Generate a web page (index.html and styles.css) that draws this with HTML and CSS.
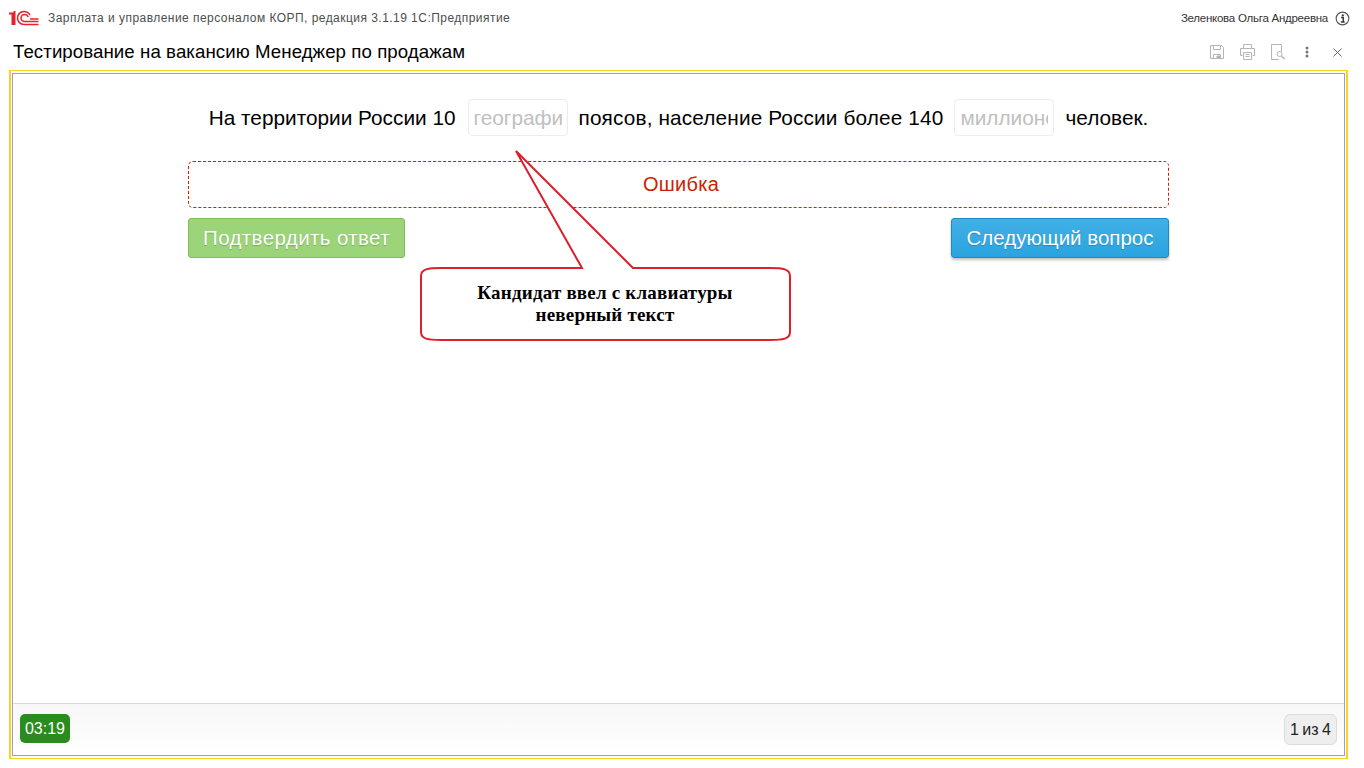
FILE: index.html
```html
<!DOCTYPE html>
<html lang="ru">
<head>
<meta charset="utf-8">
<title>Тестирование на вакансию Менеджер по продажам</title>
<link rel="stylesheet" href="styles.css">
</head>
<body>
<div class="page">
  <header class="topbar">
    <svg class="logo" width="30" height="16" viewBox="0 0 30 16" fill="none" stroke="#e4222c">
      <path d="M0 3.500h3.500V15M5.500 1v14" stroke-width="2"/>
      <path d="M29.500 14.500H15A6.500 6.500 0 1 1 15 1.500c2.600 0 4.500 1 6 3.500" stroke-width="1.500"/>
      <path d="M29.500 11.500H15.500A3.500 3.500 0 1 1 15.500 4.500c1.700 0 3 .8 3.800 2.500" stroke-width="1.500"/>
      <path d="M21 9h8.500" stroke-width="1.500"/>
    </svg>
    <span class="app-name">Зарплата и управление персоналом КОРП, редакция 3.1.19 1С:Предприятие</span>
    <span class="user-name">Зеленкова Ольга Андреевна</span>
    <svg class="info" width="15" height="15" viewBox="0 0 16 16" fill="none">
      <circle cx="8" cy="8" r="6.800" stroke="#555" stroke-width="1.200"/>
      <circle cx="8.300" cy="4.600" r="1.200" fill="#333"/>
      <path d="M6.500 7h2.300v4.300M6.300 11.700h4" stroke="#333" stroke-width="1.500"/>
    </svg>
  </header>
  <div class="titlebar">
    <h1 class="title">Тестирование на вакансию Менеджер по продажам</h1>
    <div class="tools">
      <svg width="16" height="16" viewBox="0 0 16 16" fill="none" stroke="#b5b5b5"><path d="M1.500 1.500h11l2 2v11h-13z"/><path d="M4.500 1.500v4h7v-4M4.500 14.500v-4h7v4"/><path d="M8 12h3v2.500H8z" fill="#b5b5b5"/></svg>
      <svg width="17" height="16" viewBox="0 0 17 16" fill="none" stroke="#b5b5b5"><path d="M4.500 4.500v-4h8v4M3.500 11.500h-2v-7h14v7h-2"/><path d="M4.500 8.500h8v7h-8zM6.500 10.500h4M6.500 12.500h4"/></svg>
      <svg width="16" height="16" viewBox="0 0 16 16" fill="none" stroke="#b5b5b5"><path d="M9 15.500H1.500V.5h10v7"/><circle cx="9.500" cy="10" r="2.500"/><path d="M11.500 12l3 3" stroke-width="1.500"/></svg>
      <svg class="tool-more" width="4" height="12" viewBox="0 0 4 12" fill="#777"><circle cx="2" cy="2" r="1.500"/><circle cx="2" cy="6" r="1.500"/><circle cx="2" cy="10" r="1.500"/></svg>
      <svg class="tool-close" width="9" height="9" viewBox="0 0 9 9" fill="none" stroke="#666"><path d="M.5.500l8 8M8.500.500l-8 8"/></svg>
    </div>
  </div>
  <div class="frame">
    <main class="panel">
      <div class="content">
        <div class="column">
          <p class="sentence">
            <span>На территории России 10</span>
            <span class="field field-first"><span class="field-value">географических</span></span>
            <span class="sentence-long">поясов, население России более 140</span>
            <span class="field"><span class="field-value">миллионов</span></span>
            <span>человек.</span>
          </p>
          <div class="error">Ошибка</div>
          <div class="actions">
            <button class="btn btn-green">Подтвердить ответ</button>
            <button class="btn btn-blue">Следующий вопрос</button>
          </div>
        </div>
        <div class="callout">
          <svg class="callout-shape" width="380" height="200" viewBox="0 0 380 200" fill="#fff" stroke="#dd1f2c" stroke-width="2">
            <path d="M100 5L166 122H25C12 122 5 123 5 130V186C5 193 12 194 25 194H354C367 194 374 193 374 186V130C374 123 367 122 354 122H217Z"/>
          </svg>
          <div class="callout-text">Кандидат ввел с клавиатуры<br>неверный текст</div>
        </div>
      </div>
      <footer class="footer">
        <span class="timer">03:19</span>
        <span class="pager">1 из 4</span>
      </footer>
    </main>
  </div>
</div>
</body>
</html>
```
FILE: styles.css
```css
* { box-sizing: border-box; }
html, body { margin: 0; padding: 0; background: #fff; }
body { font-family: "Liberation Sans", Arial, sans-serif; color: #000; }
.page { width: 1364px; height: 768px; display: flex; flex-direction: column; overflow: hidden; }

.topbar { height: 36px; flex: none; display: flex; align-items: center; padding: 0 14px 0 9px; }
.logo { flex: none; margin-right: 9px; }
.app-name { font-size: 12px; color: #4d4d4d; letter-spacing: 0.46px; }
.user-name { font-size: 11.5px; letter-spacing: -0.25px; color: #333; margin-left: auto; margin-right: 7px; }
.info { flex: none; }

.titlebar { height: 34px; flex: none; display: flex; align-items: center; justify-content: space-between; padding: 0 22px 2px 13px; }
.title { margin: 0; font-size: 18.67px; letter-spacing: 0.07px; font-weight: 400; }
.tools { display: flex; align-items: center; gap: 14px; }
.tool-more { margin-left: 5px; }
.tool-close { margin-left: 10px; }

.frame { flex: 1; margin: 0 16px 9px 9px; border: 2px solid #fbd128; border-top-width: 1px; border-bottom-width: 1px; padding: 2px 1px; display: flex; }
.panel { flex: 1; border: 1px solid #a3a3a3; display: flex; flex-direction: column; }

.content { flex: 1; position: relative; display: flex; justify-content: center; }
.column { width: 981px; padding-top: 25px; }

.sentence { margin: 0 0 25px; height: 37px; display: flex; align-items: center; justify-content: center; gap: 11px; font-size: 20.8px; line-height: 35px; padding-bottom: 1px; }
.sentence-long { letter-spacing: 0.13px; }
.field { width: 100px; height: 37px; border: 1px solid #ececec; border-radius: 4px; padding: 0 5px; display: block; background: #fff; margin-bottom: -1px; }
.field-first { margin-left: 1px; }
.field-value { display: block; overflow: hidden; white-space: nowrap; color: #c0c0c0; }

.error { height: 47px; border: 1px dashed #cc2200; border-radius: 5px; color: #cc2200; font-size: 20px; letter-spacing: 0.25px; line-height: 45px; text-align: center; padding-left: 5px; }

.actions { margin-top: 10px; display: flex; justify-content: space-between; }
.btn { height: 40px; font: 20.5px/38px "Liberation Sans", Arial, sans-serif; color: #fff; border-radius: 3px; padding: 0; text-shadow: 0 1px 1px rgba(0, 0, 0, 0.2); }
.btn-green { width: 217px; letter-spacing: 0.39px; background: #9bd479; border: 1px solid #7dbd5a; }
.btn-blue { width: 218px; background: linear-gradient(#41b0e4, #2aa4e0); border: 1px solid #1b8bc4; box-shadow: 0 2px 3px rgba(0, 0, 0, 0.25); }

.callout { position: absolute; left: 403px; top: 72px; width: 380px; height: 200px; }
.callout-shape { display: block; }
.callout-text { position: absolute; left: 4px; width: 370px; top: 136px; text-align: center; font: bold 19px/22px "Liberation Serif", "Times New Roman", serif; letter-spacing: 0.2px; color: #000; }

.footer { height: 52px; flex: none; border-top: 1px solid #d8d8d8; background: linear-gradient(#f7f7f7, #fff); display: flex; justify-content: space-between; align-items: flex-start; padding: 10px 7px 0 7px; }
.timer { width: 50px; height: 29px; background: #2a8c1e; border-radius: 5px; color: #fff; font-size: 16px; line-height: 29px; text-align: center; }
.pager { width: 53px; height: 31px; background: #eeeeee; border: 1px solid #dcdcdc; border-radius: 6px; font-size: 16px; word-spacing: -1px; line-height: 29px; text-align: center; color: #222; }
```
